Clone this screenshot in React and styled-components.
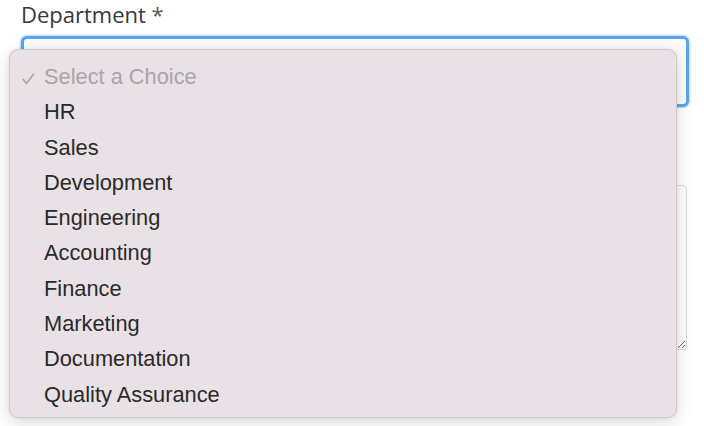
import React from "react"
import styled, { createGlobalStyle } from "styled-components"

const GlobalStyle = createGlobalStyle`
  html, body {
    margin: 0;
    padding: 0;
    background: #ffffff;
  }
  body {
    font-family: "Open Sans", "Liberation Sans", sans-serif;
  }
`

const Page = styled.form`
  padding: 0 15px 0 21px;
  width: 704px;
  height: 426px;
  box-sizing: border-box;
  overflow: hidden;
`

const Field = styled.div`
  display: flex;
  flex-direction: column;
  margin-top: ${(p) => p.gap || 0}px;
`

const Label = styled.label`
  font-family: "Open Sans", sans-serif;
  font-size: 22px;
  line-height: 28px;
  color: #383838;
  margin-bottom: 8px;
`

const Required = styled.span`
  color: #5a5a5a;
`

const SelectWrap = styled.div`
  position: relative;
`

const SelectBox = styled.div`
  height: 71px;
  box-sizing: border-box;
  border: 3px solid #5ba5ef;
  border-radius: 6px;
  background: #fbfbfb;
  box-shadow: 0 0 2px 1px rgba(91, 165, 239, 0.45);
`

const Menu = styled.ul`
  position: absolute;
  left: -12px;
  top: 13px;
  width: 668px;
  margin: 0;
  padding: 9px 0 5px;
  list-style: none;
  box-sizing: border-box;
  background: #e9e1e5;
  border: 1px solid #cdc8cb;
  border-radius: 9px;
  box-shadow: 0 6px 18px rgba(0, 0, 0, 0.13), 0 0 4px rgba(0, 0, 0, 0.08);
  z-index: 2;
`

const Option = styled.li`
  display: grid;
  grid-template-columns: 34px 1fr;
  align-items: center;
  height: 35.3px;
  font-family: "Liberation Sans", Arial, sans-serif;
  font-size: 21.8px;
  line-height: 35.3px;
  color: ${(p) => (p.$placeholder ? "#aaa5a8" : "#2a2a2a")};
`

const CheckCell = styled.span`
  display: flex;
  padding-left: 12px;
  padding-top: 4px;
`

const TextArea = styled.textarea`
  width: 666px;
  height: 165px;
  box-sizing: border-box;
  border: 1px solid #d8d8d8;
  border-radius: 4px;
  background: #fdfdfd;
  font-family: "Open Sans", sans-serif;
  font-size: 18px;
`

const Check = () => (
  <svg width="13" height="12" viewBox="0 0 13 12">
    <path
      d="M1.2 6.4 L4.4 10.6 L11.6 1.2"
      fill="none"
      stroke="#a9a4a7"
      strokeWidth="1.6"
      strokeLinecap="round"
      strokeLinejoin="round"
    />
  </svg>
)

const departments = [
  "HR",
  "Sales",
  "Development",
  "Engineering",
  "Accounting",
  "Finance",
  "Marketing",
  "Documentation",
  "Quality Assurance"
]

export default function App() {
  return (
    <>
      <GlobalStyle />
      <Page>
        <Field>
          <Label>
            Department <Required>*</Required>
          </Label>
          <SelectWrap>
            <SelectBox tabIndex={0} />
            <Menu role="listbox">
              <Option $placeholder>
                <CheckCell>
                  <Check />
                </CheckCell>
                <span>Select a Choice</span>
              </Option>
              {departments.map((d) => (
                <Option key={d}>
                  <span />
                  <span>{d}</span>
                </Option>
              ))}
            </Menu>
          </SelectWrap>
        </Field>
        {/* its label sits under the open menu, so it's left off here */}
        <Field gap={78}>
          <TextArea aria-label="Description" />
        </Field>
      </Page>
    </>
  )
}
